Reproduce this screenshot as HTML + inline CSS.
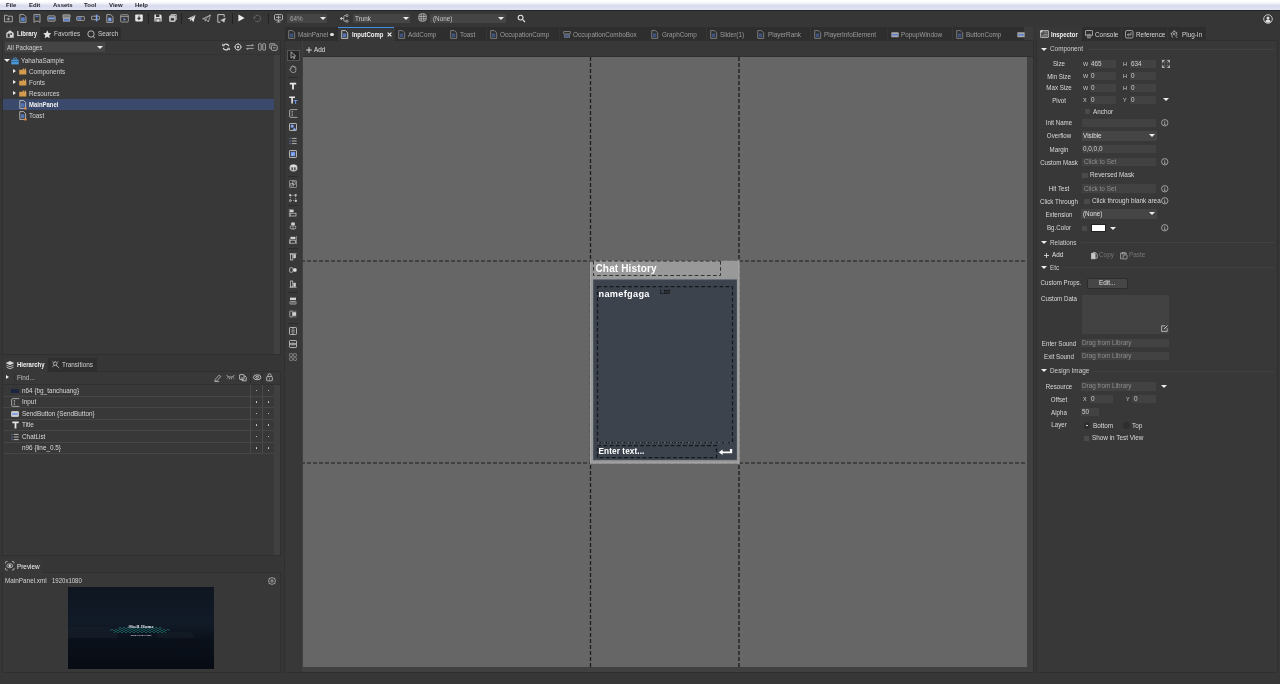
<!DOCTYPE html>
<html>
<head>
<meta charset="utf-8">
<title>FairyGUI Editor</title>
<style>
*{box-sizing:border-box;margin:0;padding:0}
html,body{width:1280px;height:684px;overflow:hidden;background:#363636}
body{will-change:transform;position:relative;font-family:"Liberation Sans",sans-serif;font-size:6.5px;color:#d8d8d8;line-height:1}
.a{position:absolute}
.t{margin-top:.5px;position:absolute;white-space:nowrap;line-height:8px;height:8px;font-size:7px;transform:scaleX(.91);transform-origin:0 50%}
.b{font-weight:bold;color:#f2f2f2;transform:scaleX(.85)}
.dim{color:#9a9a9a}
.panel{position:absolute;background:#383838;box-shadow:0 0 0 1px #2f2f2f}
.tab{position:absolute;background:#2e2e2e;height:13.5px}
.tab.on{background:#383838}
.inp{position:absolute;background:#454545;height:8px}
.sel{position:absolute;background:#454545;height:10px}
.tri{position:absolute;width:0;height:0;border-left:3px solid transparent;border-right:3px solid transparent;border-top:3.6px solid #ececec}
.trir{position:absolute;width:0;height:0;border-top:2.8px solid transparent;border-bottom:2.8px solid transparent;border-left:3.8px solid #ececec}
.hl{position:absolute;height:1px;background:#464646}
.vl{position:absolute;width:1px;background:#4a4a4a}
.cb{position:absolute;width:5px;height:5px;background:#4a4a4a}
.dot{position:absolute;width:1.5px;height:1.5px;border-radius:50%;background:#ddd}

.lc{margin-top:1px;position:absolute;left:1029.4px;width:60px;text-align:center;white-space:nowrap;line-height:8px;height:8px;font-size:7px;transform:scaleX(.88);transform-origin:50% 50%;color:#dadada}
.sm{font-size:6px;color:#cdcdcd}
.hd{color:#cfcfcf}
svg{position:absolute;overflow:visible}
</style>
</head>
<body>

<!-- MENU BAR -->
<div class="a" id="menubar" style="left:0;top:0;width:1280px;height:10px;background:linear-gradient(#ffffff,#fbfbfe 22%,#d8dbee 58%,#e2e4f3 100%)"></div>
<div class="t" style="left:6px;top:.8px;color:#26262e;font-size:6.2px;font-weight:bold;transform:scaleX(.97)">File</div>
<div class="t" style="left:28.5px;top:.8px;color:#26262e;font-size:6.2px;font-weight:bold;transform:scaleX(.97)">Edit</div>
<div class="t" style="left:52.5px;top:.8px;color:#26262e;font-size:6.2px;font-weight:bold;transform:scaleX(.97)">Assets</div>
<div class="t" style="left:83.5px;top:.8px;color:#26262e;font-size:6.2px;font-weight:bold;transform:scaleX(.97)">Tool</div>
<div class="t" style="left:108.5px;top:.8px;color:#26262e;font-size:6.2px;font-weight:bold;transform:scaleX(.97)">View</div>
<div class="t" style="left:134.5px;top:.8px;color:#26262e;font-size:6.2px;font-weight:bold;transform:scaleX(.97)">Help</div>

<!-- TOP TOOLBAR -->
<div class="a" id="toolbar" style="left:0;top:10px;width:1280px;height:17px;background:#363636;border-top:1px solid #242424"></div>


<!-- toolbar icons -->
<svg style="left:4px;top:13.6px" width="9" height="9" viewBox="0 0 9 9" fill="none" stroke="#bcbcbc" stroke-width="0.8"><path d="M0.5 1.2h2.6l0.8 1h4.4v5.6h-7.8z"/><path d="M2.5 5h3.5M4.3 3.5v3" stroke-width="0.8"/></svg>
<svg style="left:19px;top:13.6px" width="8" height="9" viewBox="0 0 8 9" fill="none" stroke="#bcbcbc" stroke-width="0.8"><path d="M0.8 0.6h4l2.2 2.2v5.6h-6.2z"/><rect x="2" y="3.4" width="3.8" height="4" fill="#5b7fc7" stroke="none"/></svg>
<svg style="left:33px;top:13.6px" width="8" height="9" viewBox="0 0 8 9" fill="none" stroke="#bcbcbc" stroke-width="0.8"><path d="M1 0.6h6v7.8l-1.6-1.2h-2.8l-1.6 1.2z"/><rect x="2.6" y="1.6" width="2.8" height="1.6" fill="#5b7fc7" stroke="none"/></svg>
<svg style="left:47px;top:14.6px" width="9" height="7" viewBox="0 0 9 7" fill="none" stroke="#bcbcbc" stroke-width="0.8"><rect x="0.9" y="0.9" width="7.2" height="5.2" rx="0.5" stroke="#c4c4c4"/><rect x="1.5" y="2.4" width="6" height="2" fill="#7fa2ee" stroke="none"/></svg>
<svg style="left:61.5px;top:14.1px" width="9" height="8" viewBox="0 0 9 8" fill="none" stroke="#b0b0b0" stroke-width="0.8"><rect x="0.9" y="0.8" width="7.2" height="2.8" rx="0.3" fill="#777"/><rect x="1.2" y="4.4" width="6.6" height="2.8" fill="#5b7fc7" stroke="#bdbdbd" stroke-width="0.6"/></svg>
<svg style="left:76px;top:15.6px" width="9" height="5" viewBox="0 0 9 5" fill="none" stroke="#bcbcbc" stroke-width="0.75"><rect x="0.6" y="0.6" width="7.8" height="3.8" rx="0.6"/><rect x="1.4" y="1.4" width="4" height="2.2" fill="#5b7fc7" stroke="none"/></svg>
<svg style="left:90.5px;top:14.1px" width="9" height="8" viewBox="0 0 9 8" fill="none" stroke="#bcbcbc" stroke-width="0.75"><rect x="0.6" y="2.2" width="7.8" height="3.4" rx="0.5"/><rect x="4.8" y="0.6" width="1.6" height="6.8" fill="#7fa2ee" stroke="none"/></svg>
<svg style="left:106px;top:13.6px" width="8" height="9" viewBox="0 0 8 9" fill="none" stroke="#bcbcbc" stroke-width="0.8"><path d="M0.8 0.6h4l2.2 2.2v5.6h-6.2z"/><rect x="2" y="3.6" width="3.6" height="3.8" fill="#5b7fc7" stroke="none"/><path d="M2.9 6.8l0.9-2.6l0.9 2.6" stroke="#dfe6ff" stroke-width="0.5"/></svg>
<svg style="left:119.5px;top:13.6px" width="9" height="9" viewBox="0 0 9 9" fill="none" stroke="#b0b0b0" stroke-width="0.8"><rect x="0.7" y="0.8" width="7.6" height="7.2" rx="0.6"/><path d="M0.7 2.6h7.6"/><path d="M3.6 4l2.4 1.4l-2.4 1.4z" fill="#7fa2ee" stroke="none"/></svg>
<svg style="left:134.5px;top:14.1px" width="8" height="8" viewBox="0 0 8 8"><rect x="0.2" y="0.4" width="7.6" height="7" rx="0.8" fill="#e4e4e4"/><path d="M4 1.6v3.4M2.6 4l1.4 1.8l1.4-1.8z" stroke="#333" stroke-width="0.9" fill="#333"/></svg>
<div class="vl" style="left:148px;top:13px;height:11px;background:#232323"></div>
<svg style="left:154px;top:14.1px" width="8" height="8" viewBox="0 0 8 8"><path d="M0.4 0.4h6l1.2 1.2v6h-7.2z" fill="#e4e4e4"/><rect x="2" y="0.4" width="3.4" height="2.6" fill="#333"/><rect x="1.6" y="4.4" width="4.8" height="3.2" fill="#333"/><rect x="2.4" y="5.2" width="3.2" height="2.4" fill="#e4e4e4"/></svg>
<svg style="left:169px;top:14.1px" width="8" height="8" viewBox="0 0 8 8" fill="none" stroke="#cfcfcf" stroke-width="0.9"><path d="M1.8 0.6h5.4v5.4"/><rect x="0.6" y="1.8" width="5.6" height="5.6" rx="0.5" fill="#bdbdbd"/><rect x="1.8" y="4.2" width="3.2" height="2.2" fill="#333" stroke="none"/></svg>
<div class="vl" style="left:181px;top:13px;height:11px;background:#232323"></div>
<svg style="left:187px;top:13.6px" width="9" height="9" viewBox="0 0 9 9"><path d="M0.4 4.8l8.2-4l-2.2 7.4l-2-2.6l-1.2 1.8l-0.2-2.4z" fill="#e4e4e4"/><path d="M3.2 5.2l5.4-4.4" stroke="#2d2d2d" stroke-width="0.5"/></svg>
<svg style="left:202px;top:13.6px" width="9" height="9" viewBox="0 0 9 9" fill="none" stroke="#c4c4c4" stroke-width="0.7"><path d="M0.6 4.8l7.8-3.8l-2.1 7l-1.9-2.5l-1.1 1.7l-0.2-2.3z"/><path d="M3.3 5.1l5.1-4.1"/></svg>
<svg style="left:217px;top:13.6px" width="9" height="9" viewBox="0 0 9 9" fill="none" stroke="#cfcfcf" stroke-width="0.9"><path d="M7.2 3V0.6h-6.4v7.6h2.6"/><path d="M3.6 6.2l4.8-2.2l-1.4 4.4l-1.2-1.4z" fill="#cfcfcf" stroke-width="0.4"/></svg>
<div class="vl" style="left:231.5px;top:13px;height:11px;background:#232323"></div>
<svg style="left:238px;top:13.6px" width="7" height="8" viewBox="0 0 7 8"><path d="M0.4 0.4l6.2 3.6l-6.2 3.6z" fill="#ececec"/></svg>
<svg style="left:253px;top:13.6px" width="9" height="9" viewBox="0 0 9 9" fill="none" stroke="#6e6e6e" stroke-width="0.8"><path d="M1.2 4.4a3.2 3.2 0 1 1 1 2.4"/><path d="M0.2 3.6l1 1.2l1.2-1" /></svg>
<div class="vl" style="left:267.5px;top:13px;height:11px;background:#232323"></div>
<svg style="left:274px;top:13.6px" width="9" height="9" viewBox="0 0 9 9" fill="none" stroke="#cfcfcf" stroke-width="0.8"><rect x="0.5" y="0.6" width="8" height="5.4" rx="1"/><path d="M2 3.3h5M4.5 1.8v3M4.5 6v1.6M2.6 8h3.8"/></svg>
<div class="sel" style="left:287px;top:13.5px;width:40px;height:9.5px"></div>
<div class="t" style="left:289.5px;top:14px;color:#a8a8a8">64%</div>
<div class="tri" style="left:319.5px;top:17px"></div>
<svg style="left:340px;top:13.6px" width="9" height="9" viewBox="0 0 9 9" fill="none" stroke="#cfcfcf" stroke-width="0.7"><circle cx="1.4" cy="4.5" r="0.9" fill="#cfcfcf"/><circle cx="7" cy="1.6" r="1.1"/><circle cx="7" cy="7.2" r="1.1"/><path d="M2.3 4.5h1.5M5.9 1.6h-1.2q-0.9 0-0.9 0.9v3.8q0 0.9 0.9 0.9h1.2"/></svg>
<div class="sel" style="left:352.5px;top:13.5px;width:57.5px;height:9.5px"></div>
<div class="t" style="left:355px;top:14px;color:#d0d0d0">Trunk</div>
<div class="tri" style="left:402.5px;top:17px"></div>
<svg style="left:417.5px;top:13.1px" width="9" height="9" viewBox="0 0 9 9" fill="none" stroke="#cfcfcf" stroke-width="0.7"><rect x="0.8" y="0.8" width="7.4" height="7.4" rx="2.4"/><path d="M0.8 3.4h7.4M0.8 5.8h7.4M3.2 0.8v7.4M5.8 0.8v7.4"/></svg>
<div class="sel" style="left:430px;top:13.5px;width:76px;height:9.5px"></div>
<div class="t" style="left:432.5px;top:14px;color:#c8c8c8">(None)</div>
<div class="tri" style="left:498px;top:17px"></div>
<svg style="left:517px;top:13.6px" width="9" height="9" viewBox="0 0 9 9" fill="none" stroke="#e4e4e4" stroke-width="1.1"><circle cx="3.6" cy="3.6" r="2.4"/><path d="M5.4 5.4l2.6 2.6"/></svg>
<svg style="left:1262.5px;top:13.6px" width="10" height="10" viewBox="0 0 10 10" fill="none" stroke="#e4e4e4" stroke-width="0.8"><circle cx="5" cy="5" r="4.3"/><circle cx="5" cy="3.9" r="1.5" fill="#e4e4e4" stroke="none"/><path d="M2.3 7.8q0.4-2.2 2.7-2.2t2.7 2.2q-1.2 1-2.7 1t-2.7-1z" fill="#e4e4e4" stroke="none"/></svg>

<!-- LEFT: LIBRARY PANEL -->
<div class="panel" id="lib" style="left:3px;top:41px;width:277.3px;height:313px"></div>

<!-- library tabs -->
<div class="tab on" style="left:3px;top:27px;width:36.5px"></div>
<div class="tab" style="left:40px;top:27px;width:43.5px"></div>
<div class="tab" style="left:84px;top:27px;width:36.5px"></div>
<svg style="left:5.5px;top:29.5px" width="8" height="8" viewBox="0 0 8 8"><path d="M0.3 3.1l3.7-2.8l3.7 2.8v4.6h-7.4z" fill="#d4d4d4"/><rect x="1.6" y="3.6" width="2.2" height="3.6" fill="#383838"/><rect x="4.4" y="3.2" width="1.6" height="1.6" fill="#383838"/></svg>
<div class="t b" style="left:16.5px;top:29.5px">Library</div>
<svg style="left:43px;top:29.5px" width="8.5" height="8.5" viewBox="0 0 10 10"><path d="M5 0.4l1.45 3.1l3.35 0.4l-2.5 2.3l0.65 3.4l-2.95-1.7l-2.95 1.7l0.65-3.4l-2.5-2.3l3.35-0.4z" fill="#e0e0e0"/></svg>
<div class="t" style="left:54px;top:29.5px;color:#cfcfcf">Favorties</div>
<svg style="left:86.5px;top:29.5px" width="9" height="9" viewBox="0 0 9 9" fill="none" stroke="#d4d4d4" stroke-width="0.8"><circle cx="4" cy="4" r="3.2"/><path d="M6.2 6.4l1.8 1.8"/></svg>
<div class="t" style="left:98px;top:29.5px;color:#cfcfcf">Search</div>
<!-- library toolbar -->
<div class="sel" style="left:5px;top:42px;width:100px;height:10px"></div>
<div class="t" style="left:6.8px;top:43px;color:#cfcfcf;transform:scaleX(.87)">All Packages</div>
<div class="tri" style="left:97px;top:45.5px"></div>
<svg style="left:221.5px;top:42.6px" width="8" height="8" viewBox="0 0 8 8" fill="none" stroke="#e4e4e4" stroke-width="1.15"><path d="M6.8 3.2a3 3 0 0 0-5.4-0.8M1.2 4.8a3 3 0 0 0 5.4 0.8"/><path d="M0.6 0.8v2h2M7.4 7.2v-2h-2" stroke-width="0.8"/></svg>
<svg style="left:233.5px;top:42.6px" width="8" height="8" viewBox="0 0 8 8" fill="none" stroke="#dcdcdc" stroke-width="0.8"><circle cx="4" cy="4" r="2.9"/><circle cx="4" cy="4" r="1.1" fill="#dcdcdc" stroke="none"/><path d="M4 0v1.4M4 6.6v1.4M0 4h1.4M6.6 4h1.4"/></svg>
<svg style="left:245.5px;top:42.6px" width="8" height="8" viewBox="0 0 8 8" fill="none" stroke="#bdbdbd" stroke-width="0.8"><path d="M0.4 2.6h7l-1.6-1.6M7.6 5.4h-7l1.6 1.6"/></svg>
<svg style="left:257.5px;top:42.6px" width="8" height="8" viewBox="0 0 8 8" fill="none" stroke="#bdbdbd" stroke-width="0.8"><rect x="0.6" y="0.8" width="2.6" height="6.4" rx="0.5"/><rect x="4.8" y="0.8" width="2.6" height="6.4" rx="0.5"/></svg>
<svg style="left:269px;top:42.6px" width="9" height="8" viewBox="0 0 9 8" fill="none" stroke="#bdbdbd" stroke-width="0.8"><path d="M1.6 5.4h-0.8v-4.6h5v0.8"/><rect x="2.4" y="2.2" width="5.8" height="5.2" rx="1.2"/><path d="M4 4.8h2.6"/></svg>
<div class="hl" style="left:3px;top:53.5px;width:277.3px;background:#323232"></div>
<!-- tree -->
<div class="a" style="left:274.3px;top:54.5px;width:6px;height:299.5px;background:#404040"></div>
<div class="a" style="left:3px;top:99px;width:271px;height:11px;background:#3b4a6c"></div>
<div class="tri" style="left:3.5px;top:58.5px"></div>
<svg style="left:11px;top:56.7px" width="8" height="8" viewBox="0 0 8 8"><path d="M0.3 2.6h7.4v4.8h-7.4z" fill="#4a9be0"/><path d="M2.6 2.4v-1.4h2.8v1.4" fill="none" stroke="#4a9be0" stroke-width="0.8"/><path d="M0.3 4.6h7.4" stroke="#383838" stroke-width="0.5"/></svg>
<div class="t" style="left:21px;top:56px;color:#d4d4d4">YahahaSample</div>
<div class="trir" style="left:12.5px;top:68.5px"></div>
<svg style="left:19px;top:67.5px" width="7.5" height="7" viewBox="0 0 7.5 7"><path d="M0.2 1.8h3.6v-1.4h1.2v1.4h0.8v-1.4h1.2v1.4h0.3v4.6h-7.1z" fill="#d39b4d"/></svg>
<div class="t" style="left:28.5px;top:67px;color:#d4d4d4">Components</div>
<div class="trir" style="left:12.5px;top:79.5px"></div>
<svg style="left:19px;top:78.5px" width="7.5" height="7" viewBox="0 0 7.5 7"><path d="M0.2 1.8h3.6v-1.4h1.2v1.4h0.8v-1.4h1.2v1.4h0.3v4.6h-7.1z" fill="#d39b4d"/></svg>
<div class="t" style="left:28.5px;top:78px;color:#d4d4d4">Fonts</div>
<div class="trir" style="left:12.5px;top:90.5px"></div>
<svg style="left:19px;top:89.5px" width="7.5" height="7" viewBox="0 0 7.5 7"><path d="M0.2 1.8h3.6v-1.4h1.2v1.4h0.8v-1.4h1.2v1.4h0.3v4.6h-7.1z" fill="#d39b4d"/></svg>
<div class="t" style="left:28.5px;top:89px;color:#d4d4d4">Resources</div>
<svg style="left:19px;top:99.5px" width="8" height="10" viewBox="0 0 8 10"><path d="M0.8 0.6h3.8l2 2v5.8h-5.8z" fill="none" stroke="#cfcfcf" stroke-width="0.8"/><rect x="1.8" y="3.2" width="3.6" height="3.8" fill="#5573b0"/><circle cx="6.4" cy="8.4" r="1.2" fill="#f08a3c"/></svg>
<div class="t b" style="left:28.5px;top:100px">MainPanel</div>
<svg style="left:19px;top:110.5px" width="8" height="10" viewBox="0 0 8 10"><path d="M0.8 0.6h3.8l2 2v5.8h-5.8z" fill="none" stroke="#cfcfcf" stroke-width="0.8"/><rect x="1.8" y="3.2" width="3.6" height="3.8" fill="#5573b0"/><circle cx="6.4" cy="8.4" r="1.2" fill="#f08a3c"/></svg>
<div class="t" style="left:28.5px;top:111px;color:#d4d4d4">Toast</div>

<!-- LEFT: HIERARCHY PANEL -->
<div class="panel" id="hier" style="left:3px;top:372px;width:277.3px;height:183px"></div>
<!-- LEFT: PREVIEW PANEL -->
<div class="panel" id="prev" style="left:3px;top:573px;width:277.3px;height:99px"></div>


<!-- hierarchy tabs -->
<div class="tab on" style="left:3px;top:358px;width:44px"></div>
<div class="tab" style="left:47.5px;top:358px;width:49px"></div>
<svg style="left:6px;top:360.5px" width="8" height="8.5" viewBox="0 0 8 8.5" fill="none" stroke="#d8d8d8" stroke-width="0.8"><path d="M4 0.5l3.5 1.6l-3.5 1.6l-3.5-1.6z" fill="#d8d8d8"/><path d="M0.5 4.2l3.5 1.6l3.5-1.6M0.5 6.2l3.5 1.6l3.5-1.6"/></svg>
<div class="t b" style="left:16.5px;top:360.5px">Hierarchy</div>
<svg style="left:50.5px;top:360px" width="9" height="9" viewBox="0 0 9 9" fill="none" stroke="#cfcfcf" stroke-width="0.7"><path d="M4.2 1.2l0.8 1.5l1.6 0.3l-1.2 1.2l0.3 1.7l-1.5-0.8l-1.5 0.8l0.3-1.7l-1.2-1.2l1.6-0.3z"/><path d="M5.8 5.6l2.4 2.6M1 0.8l0.8 0.8M7.4 0.8l-0.8 0.8M1.2 7l1-0.8"/></svg>
<div class="t" style="left:61.5px;top:360.5px;color:#cfcfcf">Transitions</div>
<!-- find row -->
<div class="trir" style="left:6px;top:375px"></div>
<div class="vl" style="left:13.5px;top:372px;height:11px;background:#303030"></div>
<div class="t" style="left:16.5px;top:373.5px;color:#bdbdbd">Find...</div>
<svg style="left:213.5px;top:373.5px" width="8" height="8" viewBox="0 0 8 8" fill="none" stroke="#cfcfcf" stroke-width="0.7"><path d="M1 5.6l4.2-4.6l1.6 1.5l-4.2 4.6h-1.6z"/><path d="M0.6 7.6h4.6"/></svg>
<svg style="left:225.5px;top:374px" width="9" height="7" viewBox="0 0 9 7" fill="none" stroke="#d8d8d8" stroke-width="0.8"><path d="M0.6 1.4q3.9 3.6 7.8 0"/><path d="M1.8 3.4l-0.8 1.2M3.6 4l-0.3 1.3M5.4 4l0.3 1.3M7.2 3.4l0.8 1.2" stroke-width="0.6"/></svg>
<svg style="left:238.5px;top:373.5px" width="8" height="8" viewBox="0 0 8 8" fill="none" stroke="#cfcfcf" stroke-width="0.8"><rect x="0.6" y="0.6" width="4.4" height="4.8" rx="0.4"/><path d="M3 3v3.8h4.2v-3.6l-1.2-1.2h-1" /></svg>
<svg style="left:252.8px;top:374.2px" width="8.4" height="6.6" viewBox="0 0 8.4 6.6" fill="none" stroke="#d8d8d8" stroke-width="0.8"><ellipse cx="4.2" cy="3.3" rx="3.7" ry="2.5"/><ellipse cx="4.2" cy="3.3" rx="1.5" ry="1"/></svg>
<svg style="left:265.5px;top:373px" width="7" height="8.5" viewBox="0 0 7 8.5" fill="none" stroke="#cfcfcf" stroke-width="0.8"><rect x="0.7" y="3.6" width="5.6" height="4.2" rx="0.6"/><path d="M1.9 3.6v-1.2a1.6 1.6 0 0 1 3.2 0v1.2"/><path d="M3.5 5.2v1.2" stroke-width="0.7"/></svg>
<div class="hl" style="left:3px;top:383.5px;width:277.3px;background:#303030"></div>
<div class="a" style="left:274.3px;top:384.5px;width:6px;height:170.5px;background:#404040"></div>
<div class="vl" style="left:250px;top:372px;height:11.5px;background:#2f2f2f"></div>
<div class="vl" style="left:262px;top:372px;height:11.5px;background:#2f2f2f"></div>
<div class="vl" style="left:250px;top:384.5px;height:69px;background:#4a4a4a"></div>
<div class="vl" style="left:262px;top:384.5px;height:69px;background:#4a4a4a"></div>
<div class="t" style="left:21.5px;top:386.0px;color:#d8d8d8">n64 {bg_tanchuang}</div>
<div class="hl" style="left:3px;top:395.5px;width:271px"></div>
<div class="dot" style="left:255.5px;top:389.75px"></div><div class="dot" style="left:267.5px;top:389.75px"></div>
<div class="t" style="left:21.5px;top:397.5px;color:#d8d8d8">Input</div>
<div class="hl" style="left:3px;top:407px;width:271px"></div>
<div class="dot" style="left:255.5px;top:401.25px"></div><div class="dot" style="left:267.5px;top:401.25px"></div>
<div class="t" style="left:21.5px;top:409.0px;color:#d8d8d8">SendButton {SendButton}</div>
<div class="hl" style="left:3px;top:418.5px;width:271px"></div>
<div class="dot" style="left:255.5px;top:412.75px"></div><div class="dot" style="left:267.5px;top:412.75px"></div>
<div class="t" style="left:21.5px;top:420.5px;color:#d8d8d8">Title</div>
<div class="hl" style="left:3px;top:430px;width:271px"></div>
<div class="dot" style="left:255.5px;top:424.25px"></div><div class="dot" style="left:267.5px;top:424.25px"></div>
<div class="t" style="left:21.5px;top:432.0px;color:#d8d8d8">ChatList</div>
<div class="hl" style="left:3px;top:441.5px;width:271px"></div>
<div class="dot" style="left:255.5px;top:435.75px"></div><div class="dot" style="left:267.5px;top:435.75px"></div>
<div class="t" style="left:21.5px;top:443.5px;color:#d8d8d8">n96 {line_0.5}</div>
<div class="hl" style="left:3px;top:453px;width:271px"></div>
<div class="dot" style="left:255.5px;top:447.25px"></div><div class="dot" style="left:267.5px;top:447.25px"></div>

<div class="a" style="left:11px;top:388.5px;width:8px;height:4px;background:#1c2540"></div>
<svg style="left:10.5px;top:397.5px" width="9" height="9" viewBox="0 0 9 9" fill="none" stroke="#cfcfcf" stroke-width="0.7"><path d="M8.4 0.6h-6.6q-1.2 0-1.2 1.2v5.4q0 1.2 1.2 1.2h6.6"/><path d="M2.6 2.4h1.6M2.6 6.6h1.6M3.4 2.4v4.2" stroke-width="0.5"/></svg>
<svg style="left:11px;top:410.5px" width="8" height="6" viewBox="0 0 8 6" fill="none" stroke="#cfcfcf" stroke-width="0.8"><rect x="0.5" y="0.5" width="7" height="5" rx="0.6" fill="#cfcfcf"/><rect x="1.2" y="2.2" width="5.6" height="1.6" fill="#6f95ea" stroke="none"/></svg>
<svg style="left:11.5px;top:421px" width="7" height="8" viewBox="0 0 7 8"><path d="M0.3 0.5h6.4v1.7h-2.3v5.4h-1.8v-5.4h-2.3z" fill="#e4e4e4"/></svg>
<svg style="left:11px;top:432.5px" width="8" height="8" viewBox="0 0 8 8" fill="none" stroke="#d8d8d8" stroke-width="0.8"><path d="M2.8 1.4h4.8M2.8 4h4.8M2.8 6.6h4.8"/><path d="M0.4 1.4h1.2M0.4 4h1.2M0.4 6.6h1.2" stroke="#6f95ea"/></svg>

<!-- preview tab -->
<div class="tab on" style="left:3px;top:559px;width:40px"></div>
<svg style="left:4.5px;top:561px" width="9.5" height="9.5" viewBox="0 0 9.5 9.5" fill="none" stroke="#d8d8d8" stroke-width="0.7"><path d="M0.5 2.6v-1.2q0-0.9 0.9-0.9h1.2M6.9 0.5h1.2q0.9 0 0.9 0.9v1.2M9 6.9v1.2q0 0.9-0.9 0.9h-1.2M2.6 9h-1.2q-0.9 0-0.9-0.9v-1.2"/><ellipse cx="4.75" cy="4.75" rx="3" ry="2"/><circle cx="4.75" cy="4.75" r="0.9" fill="#d8d8d8"/></svg>
<div class="t" style="left:16.5px;top:562px;color:#f4f4f4">Preview</div>
<div class="t" style="left:5px;top:576px;color:#d4d4d4">MainPanel.xml</div>
<div class="t" style="left:52px;top:576px;color:#d4d4d4;transform:scaleX(.86)">1920x1080</div>
<svg style="left:267.5px;top:576.5px" width="8" height="8" viewBox="0 0 8 8" fill="none" stroke="#c8c8c8" stroke-width="0.7"><path d="M4 0.4l1.4 0.9h1.5v1.5l0.7 1.2l-0.7 1.2v1.5h-1.5l-1.4 0.9l-1.4-0.9h-1.5v-1.5l-0.7-1.2l0.7-1.2v-1.5h1.5z"/><circle cx="4" cy="4" r="1.2"/></svg>
<div class="a" id="pvimg" style="left:68.25px;top:587.25px;width:146px;height:82px;background:linear-gradient(#0f1622,#111a27 45%,#0c121c 62%,#080c14);overflow:hidden">
  <div class="a" style="left:0;top:40px;width:50px;height:12px;background:#161d28;border-radius:5px 18px 0 0;opacity:.75"></div>
  <div class="a" style="left:89px;top:44.5px;width:37px;height:8px;background:#141b26;border-radius:3px 5px 0 0;opacity:.8"></div>
  <div class="a" style="left:0;top:51px;width:146px;height:31px;background:linear-gradient(#0b111b,#070b13)"></div>
  <div class="a" style="left:107px;top:52px;width:28px;height:18px;background:#0a0f18;border-radius:9px;opacity:.9"></div>
  <svg style="left:40.5px;top:38.5px" width="64" height="9" viewBox="0 0 64 9" fill="none" stroke="#2aa79d" stroke-width="0.5" opacity=".9"><path d="M1 5l2-2l2 2l2-2l2 2l2-2l2 2l2-2l2 2l2-2l2 2l2-2l2 2l2-2l2 2l2-2l2 2l2-2l2 2l2-2l2 2l2-2l2 2l2-2l2 2l2-2l2 2l2-2l2 2l2-2l2 2"/><path d="M5 7l2-2l2 2l2-2l2 2l2-2l2 2l2-2l2 2l2-2l2 2l2-2l2 2l2-2l2 2l2-2l2 2l2-2l2 2l2-2l2 2l2-2l2 2l2-2l2 2l2-2l2 2"/><path d="M9 3l2-2l2 2l2-2l2 2l2-2l2 2l2-2l2 2l2-2l2 2l2-2l2 2l2-2l2 2l2-2l2 2l2-2l2 2l2-2l2 2l2-2l2 2"/></svg>
  <div class="a" style="left:0;top:36.3px;width:146px;text-align:center;font-family:'Liberation Serif',serif;font-weight:bold;font-size:4.8px;line-height:5px;color:#e6eaef;letter-spacing:.2px">Shell Home</div>
  <div class="a" style="left:0;top:47.2px;width:146px;text-align:center;font-size:2.4px;line-height:3px;color:#d0d7de;font-weight:bold;letter-spacing:.1px">Enjoy New Home</div>
</div>

<!-- CENTER -->
<div class="panel" id="center" style="left:285px;top:41px;width:748px;height:631px"></div>
<div class="a" style="left:1023.7px;top:27px;width:9.3px;height:13px;background:#3c3c3c"></div>
<div class="tab" style="left:284.5px;top:27px;width:53.0px"></div>
<svg style="left:287.5px;top:30px" width="7.5" height="9" viewBox="0 0 7.5 9"><path d="M0.7 0.6h3.8l2.2 2.2v5.6h-6z" fill="none" stroke="#8c8c8c" stroke-width="0.8"/><rect x="1.7" y="3.4" width="3.6" height="3.8" fill="#3f527e"/></svg>
<div class="t" style="left:298.0px;top:30.5px;color:#9c9c9c">MainPanel</div>
<div class="tab on" style="left:338px;top:27px;width:56.25px"></div>
<div class="a" style="left:338px;top:26.7px;width:56.25px;height:1.2px;background:#3f8fe6"></div>
<svg style="left:341px;top:30px" width="7.5" height="9" viewBox="0 0 7.5 9"><path d="M0.7 0.6h3.8l2.2 2.2v5.6h-6z" fill="none" stroke="#e0e0e0" stroke-width="0.8"/><rect x="1.7" y="3.4" width="3.6" height="3.8" fill="#5573b0"/></svg>
<div class="t b" style="left:351.5px;top:30.5px">InputComp</div>
<div class="tab" style="left:394.5px;top:27px;width:52.0px"></div>
<svg style="left:397.5px;top:30px" width="7.5" height="9" viewBox="0 0 7.5 9"><path d="M0.7 0.6h3.8l2.2 2.2v5.6h-6z" fill="none" stroke="#8c8c8c" stroke-width="0.8"/><rect x="1.7" y="3.4" width="3.6" height="3.8" fill="#3f527e"/></svg>
<div class="t" style="left:408.0px;top:30.5px;color:#9c9c9c">AddComp</div>
<div class="tab" style="left:446.8px;top:27px;width:39.5px"></div>
<svg style="left:449.8px;top:30px" width="7.5" height="9" viewBox="0 0 7.5 9"><path d="M0.7 0.6h3.8l2.2 2.2v5.6h-6z" fill="none" stroke="#8c8c8c" stroke-width="0.8"/><rect x="1.7" y="3.4" width="3.6" height="3.8" fill="#3f527e"/></svg>
<div class="t" style="left:460.3px;top:30.5px;color:#9c9c9c">Toast</div>
<div class="tab" style="left:486.5px;top:27px;width:72.8px"></div>
<svg style="left:489.5px;top:30px" width="7.5" height="9" viewBox="0 0 7.5 9"><path d="M0.7 0.6h3.8l2.2 2.2v5.6h-6z" fill="none" stroke="#8c8c8c" stroke-width="0.8"/><rect x="1.7" y="3.4" width="3.6" height="3.8" fill="#3f527e"/></svg>
<div class="t" style="left:500.0px;top:30.5px;color:#9c9c9c">OccupationComp</div>
<div class="tab" style="left:559.5px;top:27px;width:88.2px"></div>
<svg style="left:562.5px;top:31px" width="8" height="7" viewBox="0 0 8 7" fill="none" stroke="#8c8c8c" stroke-width="0.8"><rect x="0.6" y="0.5" width="6.8" height="2.4" rx="0.4"/><rect x="1.2" y="3.8" width="5.6" height="2.6" fill="#465a8a" stroke-width="0.5"/></svg>
<div class="t" style="left:573.0px;top:30.5px;color:#9c9c9c">OccupationComboBox</div>
<div class="tab" style="left:648px;top:27px;width:58.2px"></div>
<svg style="left:651px;top:30px" width="7.5" height="9" viewBox="0 0 7.5 9"><path d="M0.7 0.6h3.8l2.2 2.2v5.6h-6z" fill="none" stroke="#8c8c8c" stroke-width="0.8"/><rect x="1.7" y="3.4" width="3.6" height="3.8" fill="#3f527e"/></svg>
<div class="t" style="left:661.5px;top:30.5px;color:#9c9c9c">GraphComp</div>
<div class="tab" style="left:706.5px;top:27px;width:47.2px"></div>
<svg style="left:709.5px;top:30px" width="7.5" height="9" viewBox="0 0 7.5 9"><path d="M0.7 0.6h3.8l2.2 2.2v5.6h-6z" fill="none" stroke="#8c8c8c" stroke-width="0.8"/><rect x="1.7" y="3.4" width="3.6" height="3.8" fill="#3f527e"/></svg>
<div class="t" style="left:720.0px;top:30.5px;color:#9c9c9c">Slider(1)</div>
<div class="tab" style="left:754px;top:27px;width:56.2px"></div>
<svg style="left:757px;top:30px" width="7.5" height="9" viewBox="0 0 7.5 9"><path d="M0.7 0.6h3.8l2.2 2.2v5.6h-6z" fill="none" stroke="#8c8c8c" stroke-width="0.8"/><rect x="1.7" y="3.4" width="3.6" height="3.8" fill="#3f527e"/></svg>
<div class="t" style="left:767.5px;top:30.5px;color:#9c9c9c">PlayerRank</div>
<div class="tab" style="left:810.5px;top:27px;width:76.7px"></div>
<svg style="left:813.5px;top:30px" width="7.5" height="9" viewBox="0 0 7.5 9"><path d="M0.7 0.6h3.8l2.2 2.2v5.6h-6z" fill="none" stroke="#8c8c8c" stroke-width="0.8"/><rect x="1.7" y="3.4" width="3.6" height="3.8" fill="#3f527e"/></svg>
<div class="t" style="left:824.0px;top:30.5px;color:#9c9c9c">PlayerInfoElement</div>
<div class="tab" style="left:887.5px;top:27px;width:64.7px"></div>
<svg style="left:891.0px;top:32px" width="8" height="5.5" viewBox="0 0 8 5.5"><rect x="0.3" y="0.3" width="7.4" height="4.9" rx="0.6" fill="#a8a8a8"/><rect x="1.1" y="2" width="5.8" height="1.5" fill="#5a7fd6"/></svg>
<div class="t" style="left:901.0px;top:30.5px;color:#9c9c9c">PopupWindow</div>
<div class="tab" style="left:952.5px;top:27px;width:60.2px"></div>
<svg style="left:955.5px;top:30px" width="7.5" height="9" viewBox="0 0 7.5 9"><path d="M0.7 0.6h3.8l2.2 2.2v5.6h-6z" fill="none" stroke="#8c8c8c" stroke-width="0.8"/><rect x="1.7" y="3.4" width="3.6" height="3.8" fill="#3f527e"/></svg>
<div class="t" style="left:966.0px;top:30.5px;color:#9c9c9c">ButtonComp</div>
<div class="tab" style="left:1013px;top:27px;width:10.7px"></div>
<svg style="left:1016.5px;top:32px" width="8" height="5.5" viewBox="0 0 8 5.5"><rect x="0.3" y="0.3" width="7.4" height="4.9" rx="0.6" fill="#a8a8a8"/><rect x="1.1" y="2" width="5.8" height="1.5" fill="#5a7fd6"/></svg>
<div class="a" style="left:330.3px;top:32.7px;width:3.6px;height:3.6px;border-radius:50%;background:#e0e0e0"></div>
<svg style="left:386.5px;top:32px" width="5" height="5" viewBox="0 0 5 5" stroke="#f4f4f4" stroke-width="1.1"><path d="M0.6 0.6l3.8 3.8M4.4 0.6l-3.8 3.8"/></svg>
<!-- tool strip -->
<div class="a" style="left:287.3px;top:49.6px;width:12.4px;height:11px;background:#262626;border:0.7px solid #555"></div>
<svg style="left:289.0px;top:51.2px" width="8" height="8" viewBox="0 0 8 8" fill="none" stroke="#d0d0d0" stroke-width="0.8"><path d="M2 0.8l4.6 4.2l-2 0.2l1.2 2l-1 0.6l-1.2-2.1l-1.5 1.4z" stroke-width="0.7"/></svg>
<svg style="left:289.0px;top:65.2px" width="8" height="8" viewBox="0 0 8 8" fill="none" stroke="#d0d0d0" stroke-width="0.8"><path d="M2 4.4v-2.2q0-0.6 0.6-0.6t0.6 0.6v-0.8q0-0.6 0.6-0.6t0.6 0.6v0.4q0-0.6 0.6-0.6t0.6 0.6v0.8q0-0.6 0.6-0.6t0.6 0.6v3q0 2-2.4 2q-1.6 0-2.4-1.2l-1.4-2q0.6-0.8 1.4 0z" stroke="#bdbdbd" stroke-width="0.7"/></svg>
<div class="hl" style="left:288px;top:77px;width:10px;background:#2c2c2c"></div>
<svg style="left:289.0px;top:82.3px" width="8" height="8" viewBox="0 0 8 8" fill="none" stroke="#d0d0d0" stroke-width="0.8"><path d="M0.8 0.7h6.4v1.7h-2.3v5h-1.8v-5h-2.3z" fill="#e8e8e8" stroke="none"/></svg>
<svg style="left:288.5px;top:95.75px" width="9" height="8.5" viewBox="0 0 9 8.5" fill="none" stroke="#d0d0d0" stroke-width="0.8"><path d="M0.2 0.5h5.8v1.6h-2.1v5.4h-1.6v-5.4h-2.1z" fill="#e8e8e8" stroke="none"/><path d="M4.8 3.9h3.6v1.1h-1.3v3h-1v-3h-1.3z" fill="#6f95ea" stroke="none"/></svg>
<svg style="left:288.5px;top:109.2px" width="9" height="9" viewBox="0 0 9 9" fill="none" stroke="#d0d0d0" stroke-width="0.8"><path d="M8.4 0.6h-6.6q-1.2 0-1.2 1.2v5.4q0 1.2 1.2 1.2h6.6" stroke-width="0.7"/><path d="M2.4 2.4h1.6M2.4 6.6h1.6M3.2 2.4v4.2" stroke-width="0.5"/></svg>
<svg style="left:289.0px;top:123.3px" width="8" height="8" viewBox="0 0 8 8" fill="none" stroke="#d0d0d0" stroke-width="0.8"><rect x="0.5" y="0.5" width="7" height="7" rx="0.6"/><circle cx="3.2" cy="3.2" r="1.6" fill="#7fa2ee" stroke="none"/><path d="M3.4 7l2-2.6l2 2.6z" fill="#7fa2ee" stroke="none"/></svg>
<svg style="left:289.0px;top:136.6px" width="8" height="8" viewBox="0 0 8 8" fill="none" stroke="#d0d0d0" stroke-width="0.8"><path d="M2.8 1.4h4.8M2.8 4h4.8M2.8 6.6h4.8"/><path d="M0.4 1.4h1.2M0.4 4h1.2M0.4 6.6h1.2" stroke="#6f95ea"/></svg>
<svg style="left:289.0px;top:150.0px" width="8" height="8" viewBox="0 0 8 8" fill="none" stroke="#d0d0d0" stroke-width="0.8"><rect x="0.5" y="0.5" width="7" height="7" rx="0.6"/><rect x="1.8" y="1.8" width="4.4" height="4.4" fill="#6f95ea" stroke="none"/><path d="M3 5l2-2M3 3.6v1.4h1.4" stroke="#dfe6ff" stroke-width="0.4"/></svg>
<svg style="left:288.5px;top:163.5px" width="9" height="8" viewBox="0 0 9 8" fill="none" stroke="#d0d0d0" stroke-width="0.8"><ellipse cx="4.5" cy="4" rx="4" ry="3.4" fill="#c8c8c8" stroke="none"/><ellipse cx="4.5" cy="2" rx="3.2" ry="1.2" fill="#e8e8e8" stroke="#999" stroke-width="0.4"/><rect x="2.4" y="3.4" width="1.6" height="2.8" fill="#555" stroke="none"/><rect x="5" y="3.4" width="1.6" height="2.8" fill="#555" stroke="none"/></svg>
<div class="hl" style="left:288px;top:175.5px;width:10px;background:#2c2c2c"></div>
<svg style="left:289.0px;top:179.5px" width="8" height="8" viewBox="0 0 8 8" fill="none" stroke="#d0d0d0" stroke-width="0.8"><rect x="0.5" y="0.5" width="7" height="7" rx="0.6" stroke="#9c9c9c"/><rect x="1.8" y="3.4" width="2.6" height="2.6" stroke="#bdbdbd" stroke-width="0.6"/><rect x="3.6" y="1.8" width="2.6" height="2.6" stroke="#bdbdbd" stroke-width="0.6"/></svg>
<svg style="left:289.0px;top:193.8px" width="8" height="8" viewBox="0 0 8 8" fill="none" stroke="#d0d0d0" stroke-width="0.8"><path d="M1.4 1.4h5.2v5.2h-5.2z" stroke-dasharray="1 1" stroke-width="0.6"/><rect x="0.2" y="0.2" width="2" height="2" fill="#d0d0d0" stroke="none"/><rect x="5.8" y="5.8" width="2" height="2" fill="#d0d0d0" stroke="none"/><rect x="0.4" y="6" width="1.6" height="1.6" stroke-width="0.5"/><rect x="6" y="0.4" width="1.6" height="1.6" stroke-width="0.5"/></svg>
<div class="hl" style="left:288px;top:205px;width:10px;background:#2c2c2c"></div>
<svg style="left:289.0px;top:209.0px" width="8" height="8" viewBox="0 0 8 8" fill="none" stroke="#d0d0d0" stroke-width="0.8"><rect x="1" y="0.6" width="3.6" height="2.6" fill="#d0d0d0" stroke="none"/><rect x="1.2" y="4.2" width="5.8" height="2.8" stroke-width="0.7"/><path d="M0.4 0v8" stroke-width="0.5"/></svg>
<svg style="left:289.0px;top:222.3px" width="8" height="8" viewBox="0 0 8 8" fill="none" stroke="#d0d0d0" stroke-width="0.8"><rect x="2.2" y="0.6" width="3.6" height="2.6" fill="#d0d0d0" stroke="none"/><rect x="1.2" y="4" width="5.6" height="2.8" rx="1" stroke-width="0.7"/><path d="M4 0v8" stroke-width="0.4"/></svg>
<svg style="left:289.0px;top:235.6px" width="8" height="8" viewBox="0 0 8 8" fill="none" stroke="#d0d0d0" stroke-width="0.8"><rect x="1.4" y="0.8" width="5" height="2.4" fill="#d0d0d0" stroke="none"/><rect x="1" y="4.2" width="5.4" height="3" stroke-width="0.7"/><path d="M7.4 0v8M0.6 3v5" stroke-width="0.5"/></svg>
<div class="hl" style="left:288px;top:248.2px;width:10px;background:#2c2c2c"></div>
<svg style="left:289.0px;top:252.8px" width="8" height="8" viewBox="0 0 8 8" fill="none" stroke="#d0d0d0" stroke-width="0.8"><path d="M0.4 0.6h7.2" stroke-width="0.6"/><rect x="1.4" y="1.2" width="2.4" height="5.8" stroke-width="0.7"/><rect x="4.4" y="1.2" width="2.4" height="4" fill="#d0d0d0" stroke="none"/></svg>
<svg style="left:289.0px;top:266.3px" width="8" height="8" viewBox="0 0 8 8" fill="none" stroke="#d0d0d0" stroke-width="0.8"><rect x="0.6" y="1.6" width="3.4" height="4.8" rx="1.4" stroke-width="0.7"/><rect x="4.2" y="2.2" width="3.4" height="3.6" rx="1.2" fill="#e0e0e0" stroke="none"/></svg>
<svg style="left:289.0px;top:279.5px" width="8" height="8" viewBox="0 0 8 8" fill="none" stroke="#d0d0d0" stroke-width="0.8"><path d="M0.4 7.4h7.2" stroke-width="0.6"/><rect x="1.4" y="1" width="2.4" height="5.8" stroke-width="0.7"/><rect x="4.4" y="2.8" width="2.4" height="4" fill="#d0d0d0" stroke="none"/></svg>
<div class="hl" style="left:288px;top:292px;width:10px;background:#2c2c2c"></div>
<svg style="left:289.0px;top:296.7px" width="8" height="8" viewBox="0 0 8 8" fill="none" stroke="#d0d0d0" stroke-width="0.8"><rect x="1" y="0.6" width="6" height="2.4" fill="#d0d0d0" stroke="none"/><rect x="1" y="4.4" width="6" height="2.6" rx="0.5" stroke-width="0.7"/><path d="M2.4 5.7h3.2" stroke-width="0.5"/></svg>
<svg style="left:289.0px;top:309.9px" width="8" height="8" viewBox="0 0 8 8" fill="none" stroke="#d0d0d0" stroke-width="0.8"><rect x="0.8" y="1" width="3" height="6" rx="0.5" stroke-width="0.7"/><rect x="3.4" y="2.2" width="3.8" height="3.6" fill="#d0d0d0" stroke="none"/><path d="M4.4 1.2h3M4.4 6.8h3" stroke-width="0.4"/></svg>
<div class="hl" style="left:288px;top:322.5px;width:10px;background:#2c2c2c"></div>
<svg style="left:289.0px;top:326.8px" width="8" height="8" viewBox="0 0 8 8" fill="none" stroke="#d0d0d0" stroke-width="0.8"><rect x="0.5" y="0.5" width="7" height="7" rx="0.8"/><path d="M4 1.4v5.2M2.8 2.6l1.2-1.2l1.2 1.2M2.8 5.4l1.2 1.2l1.2-1.2M2 4h4" stroke-width="0.5"/></svg>
<svg style="left:289.0px;top:340.0px" width="8" height="8" viewBox="0 0 8 8" fill="none" stroke="#d0d0d0" stroke-width="0.8"><rect x="0.5" y="0.5" width="7" height="7" rx="0.8"/><path d="M1.4 4h5.2M2.6 2.8l-1.2 1.2l1.2 1.2M5.4 2.8l1.2 1.2l-1.2 1.2M4 2v4" stroke-width="0.5"/><path d="M1 3.2h6v1.6h-6z" fill="#d0d0d0" stroke="none" opacity=".5"/></svg>
<svg style="left:289.0px;top:353.0px" width="8" height="8" viewBox="0 0 8 8" fill="none" stroke="#d0d0d0" stroke-width="0.8"><rect x="0.6" y="0.6" width="2.8" height="2.8" rx="0.5" stroke="#9c9c9c" stroke-width="0.7"/><rect x="4.6" y="0.6" width="2.8" height="2.8" rx="0.5" stroke="#9c9c9c" stroke-width="0.7"/><rect x="0.6" y="4.6" width="2.8" height="2.8" rx="0.5" stroke="#9c9c9c" stroke-width="0.7"/><rect x="4.6" y="4.6" width="2.8" height="2.8" rx="0.5" stroke="#9c9c9c" stroke-width="0.7"/></svg>
<!-- sub toolbar -->
<div class="hl" style="left:302.5px;top:56px;width:730.5px;background:#2f2f2f"></div>
<div class="vl" style="left:302px;top:41px;height:631px;background:#404040"></div>
<svg style="left:305.5px;top:46.5px" width="6" height="6" viewBox="0 0 6 6" stroke="#e8e8e8" stroke-width="0.9"><path d="M3 0.2v5.6M0.2 3h5.6"/></svg>
<div class="t" style="left:313.5px;top:45.5px;color:#e0e0e0">Add</div>
<!-- canvas -->
<div class="a" style="left:1027px;top:57px;width:6px;height:615px;background:#404040"></div>
<div class="a" style="left:302.5px;top:667px;width:730.5px;height:5px;background:#404040"></div>
<div class="a" id="canvas" style="left:302.5px;top:57px;width:724.5px;height:610px;background:#666666;overflow:hidden">
  <svg style="left:-0.5px;top:0" width="725" height="610" viewBox="0 0 725 610" fill="none" stroke="#1c1c1c" stroke-width="1" stroke-dasharray="4 2"><path d="M288.5 0v610M437 0v610" stroke-width="1.3"/><path d="M0 204h725M0 406h725" stroke-dashoffset="1"/></svg>

  <!-- component (svg origin = page 302,57) -->
  <svg style="left:-0.5px;top:0" width="726" height="610" viewBox="0 0 726 610" fill="none">
    <rect x="288" y="203.5" width="149.5" height="203" fill="#999"/>
    <path d="M288.5 203.5v203M437 203.5v203M288 406h149.5" stroke="#a9a9a9" stroke-width="1"/>
    <rect x="291.1" y="222.4" width="143.9" height="180.8" fill="#4b5560"/>
    <rect x="291.9" y="223.2" width="142.3" height="179.2" fill="#3c434d"/>
    <g stroke="#15181c" stroke-width="1.25" stroke-dasharray="3.7 2.4">
      <path d="M288 204h130.5" stroke="#262626" stroke-width="1"/>
      <path d="M418.5 204v14.5h-127v-14.5" stroke="#333" stroke-width="1"/>
      <rect x="295.5" y="229.5" width="135" height="156"/>
      <rect x="295.5" y="388.5" width="119" height="12"/>
    </g>
    <path d="M296 385.7h134" stroke="#d0d4d8" stroke-width="0.5" stroke-dasharray="1.3 1.7" opacity=".75"/>
    <path d="M416.8 395.2l3.8-2.7v1.9h7.3v-2.5h2.3v4.4h-9.6v1.7z" fill="#fff"/>
  </svg>
  <div class="a" style="left:293px;top:206.2px;font-size:10px;line-height:11px;font-weight:bold;color:#fff;white-space:nowrap;letter-spacing:.15px">Chat History</div>
  <div class="a" style="left:296px;top:231.6px;font-size:9.2px;line-height:11px;font-weight:bold;color:#fff;white-space:nowrap;letter-spacing:.3px">namefgaga</div>
  <div class="a" style="left:357.5px;top:231.5px;font-size:6.4px;line-height:6px;color:#000;white-space:nowrap">List</div>
  <div class="a" style="left:296px;top:389.6px;font-size:8.2px;line-height:10px;font-weight:bold;color:#fff;white-space:nowrap;letter-spacing:.1px">Enter text...</div>
</div>

<!-- RIGHT: INSPECTOR -->
<div class="panel" id="insp" style="left:1037px;top:41px;width:240px;height:631px"></div>
<div class="tab on" style="left:1037px;top:27px;width:44px;height:14px"></div>
<div class="tab" style="left:1081.5px;top:27px;width:39.5px"></div>
<div class="tab" style="left:1121.5px;top:27px;width:45.5px"></div>
<div class="tab" style="left:1167.5px;top:27px;width:38px"></div>
<svg style="left:1039.5px;top:30px" width="9" height="8" viewBox="0 0 9 8" fill="none" stroke="#d8d8d8" stroke-width="0.7"><rect x="0.5" y="0.5" width="8" height="7" rx="0.5"/><rect x="0.5" y="0.5" width="2" height="2" fill="#d8d8d8" stroke="none"/><path d="M3.4 2h4.4M1.4 4.2h1M3.4 4.2h4.4M1.4 6h6.4"/></svg>
<div class="t b" style="left:1050.8px;top:30px">Inspector</div>
<svg style="left:1084.5px;top:30px" width="8" height="8.5" viewBox="0 0 8 8.5" fill="none" stroke="#cfcfcf" stroke-width="0.7"><rect x="0.5" y="0.5" width="7" height="5.2" rx="0.6"/><path d="M1.6 4.4h4.8" stroke-width="0.6"/><path d="M2 7.8h4M3 5.8v2M5 5.8v2" stroke-width="0.6"/></svg>
<div class="t" style="left:1095.2px;top:30.0px;color:#d4d4d4">Console</div>
<svg style="left:1124.5px;top:30px" width="8.5" height="8.5" viewBox="0 0 8.5 8.5" fill="none" stroke="#cfcfcf" stroke-width="0.7"><rect x="0.5" y="0.5" width="7.5" height="7.5" rx="1.4"/><path d="M6 2.4v2.4h-3.4M3.8 3.4l-1.4 1.4l1.4 1.4" stroke-width="0.7"/></svg>
<div class="t" style="left:1135.7px;top:30.0px;color:#d4d4d4">Reference</div>
<svg style="left:1170px;top:30px" width="9" height="8.5" viewBox="0 0 9 8.5" fill="none" stroke="#cfcfcf" stroke-width="0.7"><path d="M2.2 5.8a2.6 2.6 0 1 1 3.6 0.4l1.4 1.6M3 7.6l-1.6-1.6M0.6 3.4l1.2 0.4M4.2 0.4l0.2 1M7.4 2.2l-1 0.6"/><circle cx="4.2" cy="4" r="0.8"/></svg>
<div class="t" style="left:1181.5px;top:30.0px;color:#d4d4d4">Plug-In</div>
<div class="tri" style="left:1041px;top:47.6px"></div>
<div class="t" style="left:1049.6px;top:44.7px;color:#cfcfcf">Component</div>
<div class="hl" style="left:1088px;top:48.7px;width:187px;background:#414141"></div>
<div class="lc" style="top:59.3px">Size</div>
<div class="t sm" style="left:1082.5px;top:59.099999999999994px">W</div>
<div class="a" style="left:1089.7px;top:59.699999999999996px;width:26.3px;height:8.2px;background:#424242"></div>
<div class="t" style="left:1091px;top:59.3px;color:#d0d0d0">465</div>
<div class="t sm" style="left:1122.7px;top:59.099999999999994px">H</div>
<div class="a" style="left:1129.8px;top:59.699999999999996px;width:25.8px;height:8.2px;background:#424242"></div>
<div class="t" style="left:1131px;top:59.3px;color:#d0d0d0">634</div>
<div class="lc" style="top:71.5px">Min Size</div>
<div class="t sm" style="left:1082.5px;top:71.3px">W</div>
<div class="a" style="left:1089.7px;top:71.9px;width:26.3px;height:8.2px;background:#424242"></div>
<div class="t" style="left:1091px;top:71.5px;color:#d0d0d0">0</div>
<div class="t sm" style="left:1122.7px;top:71.3px">H</div>
<div class="a" style="left:1129.8px;top:71.9px;width:25.8px;height:8.2px;background:#424242"></div>
<div class="t" style="left:1131px;top:71.5px;color:#d0d0d0">0</div>
<div class="lc" style="top:82.9px">Max Size</div>
<div class="t sm" style="left:1082.5px;top:83.39999999999999px">W</div>
<div class="a" style="left:1089.7px;top:84.0px;width:26.3px;height:8.2px;background:#424242"></div>
<div class="t" style="left:1091px;top:83.6px;color:#d0d0d0">0</div>
<div class="t sm" style="left:1122.7px;top:83.39999999999999px">H</div>
<div class="a" style="left:1129.8px;top:84.0px;width:25.8px;height:8.2px;background:#424242"></div>
<div class="t" style="left:1131px;top:83.6px;color:#d0d0d0">0</div>
<div class="lc" style="top:95.9px">Pivot</div>
<div class="t sm" style="left:1082.5px;top:95.7px">X</div>
<div class="a" style="left:1089.7px;top:96.30000000000001px;width:26.3px;height:8.2px;background:#424242"></div>
<div class="t" style="left:1091px;top:95.9px;color:#d0d0d0">0</div>
<div class="t sm" style="left:1122.7px;top:95.7px">Y</div>
<div class="a" style="left:1129.8px;top:96.30000000000001px;width:25.8px;height:8.2px;background:#424242"></div>
<div class="t" style="left:1131px;top:95.9px;color:#d0d0d0">0</div>
<div class="a" style="left:1160.5px;top:59.3px;width:9.7px;height:9.2px;background:#444"></div>
<svg style="left:1161.5px;top:60px" width="8" height="8" viewBox="0 0 8 8" fill="none" stroke="#e0e0e0" stroke-width="0.7"><path d="M0.5 2.6v-2.1h2.1M5.4 0.5h2.1v2.1M7.5 5.4v2.1h-2.1M2.6 7.5h-2.1v-2.1"/><path d="M0.5 0.5l2 2M7.5 0.5l-2 2M7.5 7.5l-2-2M0.5 7.5l2-2" stroke-width="0.5"/></svg>
<div class="tri" style="left:1162.8px;top:98.2px"></div>
<div class="a" style="left:1085px;top:109.1px;width:5.4px;height:5.4px;background:#4a4a4a"></div>
<div class="t" style="left:1092.5px;top:107.3px;color:#dadada">Anchor</div>
<div class="lc" style="top:118.4px">Init Name</div>
<div class="a" style="left:1081.7px;top:118.80000000000001px;width:74.0px;height:8.2px;background:#424242"></div>
<svg style="left:1161.25px;top:118.85px" width="7.5" height="7.5" viewBox="0 0 7.5 7.5" fill="none" stroke="#d4d4d4" stroke-width="0.65"><circle cx="3.75" cy="3.75" r="3.2"/><path d="M3.75 3.3v2.3M3.1 5.6h1.3M3.2 3.3h0.55" stroke-width="0.6"/><circle cx="3.75" cy="2.1" r="0.45" fill="#d4d4d4" stroke="none"/></svg>
<div class="lc" style="top:131.3px">Overflow</div>
<div class="a" style="left:1081.7px;top:130.8px;width:75.1px;height:10px;background:#454545"></div>
<div class="t" style="left:1083px;top:131.1px;color:#e0e0e0">Visible</div>
<div class="tri" style="left:1149px;top:134.0px"></div>
<div class="lc" style="top:144.5px">Margin</div>
<div class="a" style="left:1081.7px;top:144.9px;width:74.0px;height:8.2px;background:#424242"></div>
<div class="t" style="left:1082.5px;top:144.5px;color:#d0d0d0">0,0,0,0</div>
<div class="lc" style="top:157.5px">Custom Mask</div>
<div class="a" style="left:1081.7px;top:157.9px;width:74.0px;height:8.2px;background:#424242"></div>
<div class="t" style="left:1083.7px;top:157.5px;color:#8e8e8e">Click to Set</div>
<svg style="left:1161.25px;top:158.05px" width="7.5" height="7.5" viewBox="0 0 7.5 7.5" fill="none" stroke="#d4d4d4" stroke-width="0.65"><circle cx="3.75" cy="3.75" r="3.2"/><path d="M3.75 3.3v2.3M3.1 5.6h1.3M3.2 3.3h0.55" stroke-width="0.6"/><circle cx="3.75" cy="2.1" r="0.45" fill="#d4d4d4" stroke="none"/></svg>
<div class="a" style="left:1082.3px;top:172.5px;width:5.4px;height:5.4px;background:#4a4a4a"></div>
<div class="t" style="left:1089.6px;top:170.7px;color:#dadada">Reversed Mask</div>
<div class="lc" style="top:184.0px">Hit Test</div>
<div class="a" style="left:1081.7px;top:184.4px;width:74.0px;height:8.2px;background:#424242"></div>
<div class="t" style="left:1083.7px;top:184.0px;color:#8e8e8e">Click to Set</div>
<svg style="left:1161.25px;top:184.55px" width="7.5" height="7.5" viewBox="0 0 7.5 7.5" fill="none" stroke="#d4d4d4" stroke-width="0.65"><circle cx="3.75" cy="3.75" r="3.2"/><path d="M3.75 3.3v2.3M3.1 5.6h1.3M3.2 3.3h0.55" stroke-width="0.6"/><circle cx="3.75" cy="2.1" r="0.45" fill="#d4d4d4" stroke="none"/></svg>
<div class="lc" style="top:196.9px">Click Through</div>
<div class="a" style="left:1084.3px;top:198.5px;width:5.4px;height:5.4px;background:#4a4a4a"></div>
<div class="t" style="left:1092px;top:196.5px;color:#dadada">Click through blank area</div>
<svg style="left:1161.25px;top:197.45px" width="7.5" height="7.5" viewBox="0 0 7.5 7.5" fill="none" stroke="#d4d4d4" stroke-width="0.65"><circle cx="3.75" cy="3.75" r="3.2"/><path d="M3.75 3.3v2.3M3.1 5.6h1.3M3.2 3.3h0.55" stroke-width="0.6"/><circle cx="3.75" cy="2.1" r="0.45" fill="#d4d4d4" stroke="none"/></svg>
<div class="lc" style="top:209.8px">Extension</div>
<div class="a" style="left:1081px;top:209.1px;width:75.8px;height:10px;background:#454545"></div>
<div class="t" style="left:1082.9px;top:209.6px;color:#e0e0e0">(None)</div>
<div class="tri" style="left:1148.8px;top:212.4px"></div>
<div class="lc" style="top:223.1px">Bg.Color</div>
<div class="a" style="left:1082px;top:225.5px;width:5.4px;height:5.4px;background:#4a4a4a"></div>
<div class="a" style="left:1090.6px;top:224.2px;width:15px;height:8px;background:#fff;border:0.7px solid #222"></div>
<div class="tri" style="left:1110.2px;top:226.8px"></div>
<svg style="left:1161.25px;top:223.65px" width="7.5" height="7.5" viewBox="0 0 7.5 7.5" fill="none" stroke="#d4d4d4" stroke-width="0.65"><circle cx="3.75" cy="3.75" r="3.2"/><path d="M3.75 3.3v2.3M3.1 5.6h1.3M3.2 3.3h0.55" stroke-width="0.6"/><circle cx="3.75" cy="2.1" r="0.45" fill="#d4d4d4" stroke="none"/></svg>
<div class="tri" style="left:1041px;top:241.0px"></div>
<div class="t" style="left:1049.6px;top:238.1px;color:#cfcfcf">Relations</div>
<div class="hl" style="left:1080.5px;top:242.1px;width:194.5px;background:#414141"></div>
<svg style="left:1044px;top:253px" width="5" height="5" viewBox="0 0 5 5" stroke="#e4e4e4" stroke-width="0.8"><path d="M2.5 0v5M0 2.5h5"/></svg>
<div class="t" style="left:1051.5px;top:250.9px;color:#e0e0e0">Add</div>
<svg style="left:1090.8px;top:251.8px" width="7" height="7.5" viewBox="0 0 7 7.5" fill="none" stroke="#c8c8c8" stroke-width="0.7"><rect x="0.5" y="1.6" width="3.6" height="5.2" fill="#c8c8c8"/><path d="M2 1.4v-0.9h2.6l1.6 1.6v4h-1.8"/></svg>
<div class="t" style="left:1099px;top:250.9px;color:#777">Copy</div>
<svg style="left:1120px;top:251.8px" width="7.5" height="7.5" viewBox="0 0 7.5 7.5" fill="none" stroke="#bdbdbd" stroke-width="0.7"><path d="M2.4 1.2h-1.8v5.6h2M5 1.2h1.2v1.4"/><rect x="2.2" y="0.4" width="2.8" height="1.5" stroke-width="0.6"/><rect x="3.2" y="3" width="3.8" height="4" rx="0.5"/></svg>
<div class="t" style="left:1128.7px;top:250.9px;color:#777">Paste</div>
<div class="tri" style="left:1041px;top:266.0px"></div>
<div class="t" style="left:1049.6px;top:263.1px;color:#cfcfcf">Etc</div>
<div class="hl" style="left:1062.5px;top:267.1px;width:212.5px;background:#414141"></div>
<div class="lc" style="left:1031px;top:278.3px">Custom Props.</div>
<div class="a" style="left:1086.6px;top:277.6px;width:41.2px;height:11.4px;background:#464646;border:0.7px solid #2c2c2c;border-radius:2px"></div>
<div class="t" style="left:1099.3px;top:278.7px;color:#e4e4e4">Edit...</div>
<div class="lc" style="top:294.0px">Custom Data</div>
<div class="a" style="left:1082px;top:294.7px;width:87px;height:39px;background:#424242"></div>
<svg style="left:1160.5px;top:324.6px" width="7" height="7" viewBox="0 0 7 7" fill="none" stroke="#e0e0e0" stroke-width="0.7"><path d="M4 0.8h-3.4v5.6h5.6v-3.2"/><path d="M3 4.2l3.4-3.6" stroke-width="0.9"/></svg>
<div class="lc" style="top:338.7px">Enter Sound</div>
<div class="a" style="left:1081px;top:338.65px;width:87.7px;height:8.7px;background:#424242"></div>
<div class="t" style="left:1082px;top:338.3px;color:#8e8e8e">Drag from Library</div>
<div class="lc" style="top:351.6px">Exit Sound</div>
<div class="a" style="left:1081px;top:351.54999999999995px;width:87.7px;height:8.7px;background:#424242"></div>
<div class="t" style="left:1082px;top:351.2px;color:#8e8e8e">Drag from Library</div>
<div class="tri" style="left:1041px;top:369.4px"></div>
<div class="t" style="left:1049.6px;top:366.5px;color:#cfcfcf">Design Image</div>
<div class="hl" style="left:1093px;top:370.5px;width:182px;background:#414141"></div>
<div class="lc" style="top:382.1px">Resource</div>
<div class="a" style="left:1081px;top:382.0px;width:75.3px;height:9px;background:#424242"></div>
<div class="t" style="left:1082.3px;top:381.8px;color:#8e8e8e">Drag from Library</div>
<div class="tri" style="left:1161px;top:384.9px"></div>
<div class="lc" style="top:395.0px">Offset</div>
<div class="t sm" style="left:1082.6px;top:394.5px">X</div>
<div class="a" style="left:1090.1px;top:395.2px;width:23.4px;height:8.2px;background:#424242"></div>
<div class="t" style="left:1091.3px;top:394.9px;color:#d0d0d0">0</div>
<div class="t sm" style="left:1125.9px;top:394.5px">Y</div>
<div class="a" style="left:1132.2px;top:395.2px;width:24.1px;height:8.2px;background:#424242"></div>
<div class="t" style="left:1133.5px;top:394.9px;color:#d0d0d0">0</div>
<div class="lc" style="top:407.9px">Alpha</div>
<div class="a" style="left:1081px;top:407.9px;width:18px;height:8.2px;background:#424242"></div>
<div class="t" style="left:1082px;top:407.3px;color:#d0d0d0">50</div>
<div class="lc" style="top:420.1px">Layer</div>
<div class="a" style="left:1083.7px;top:422.4px;width:6.4px;height:6.4px;border-radius:50%;background:#2e2e2e"></div><div class="a" style="left:1086px;top:424.7px;width:1.8px;height:1.8px;border-radius:50%;background:#f0f0f0"></div>
<div class="t" style="left:1092.7px;top:421.1px;color:#dadada">Bottom</div>
<div class="a" style="left:1123.2px;top:422.4px;width:6.4px;height:6.4px;border-radius:50%;background:#2e2e2e"></div>
<div class="t" style="left:1132.2px;top:421.1px;color:#dadada">Top</div>
<div class="a" style="left:1083.8px;top:435.6px;width:5.4px;height:5.4px;background:#4a4a4a"></div>
<div class="t" style="left:1091.5px;top:433.8px;color:#dadada">Show in Test View</div>

<!-- BOTTOM STATUS -->
<div class="a" style="left:0;top:673px;width:1280px;height:11px;background:#373737"></div>

</body>
</html>
